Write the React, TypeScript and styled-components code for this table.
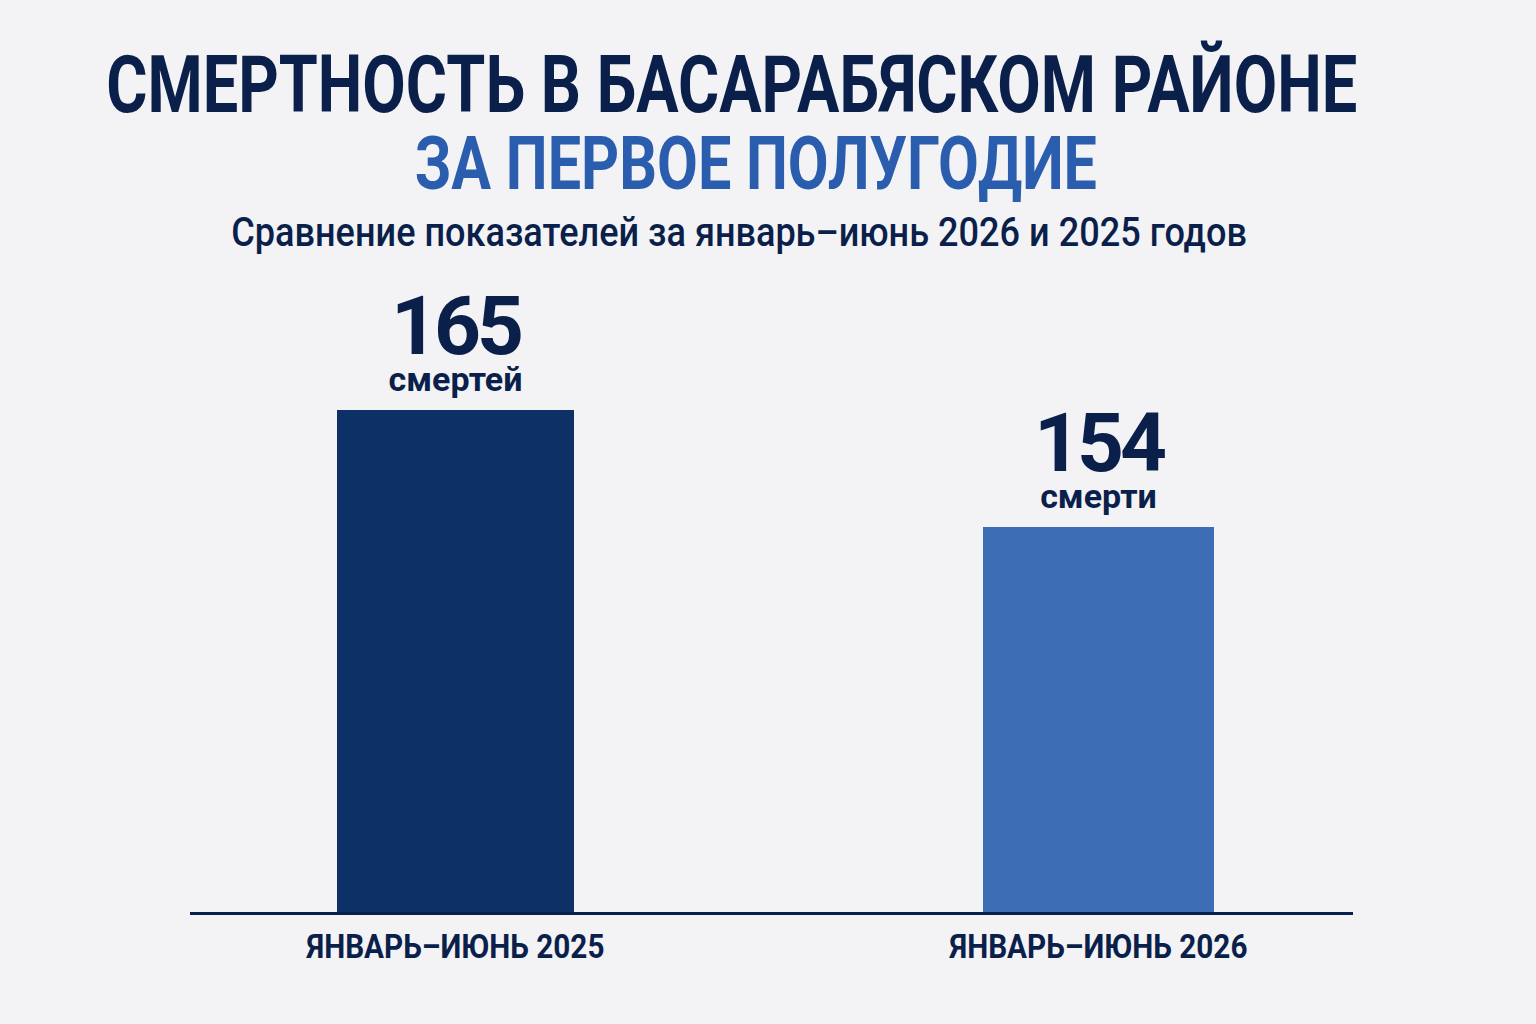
import React from "react";
import styled, { createGlobalStyle } from "styled-components";

const Global = createGlobalStyle`
  html, body { margin: 0; padding: 0; background: #f3f3f6; }
  body { width: 1536px; height: 1024px; overflow: hidden; }
`;

const Page = styled.div`
  width: 1536px;
  height: 1024px;
  background: #f3f3f6;
  display: flex;
  flex-direction: column;
  box-sizing: border-box;
  padding-top: 45px;
  overflow: hidden;
`;

const Header = styled.header`
  display: flex;
  flex-direction: column;
  align-items: center;
`;

/* Condensed type: the reference uses a condensed grotesque; Roboto squeezed horizontally */
const Line = styled.div<{
  $size: number;
  $lh: number;
  $weight: number;
  $color: string;
  $scale: number;
  $shift: number;
  $mt?: number;
}>`
  font-family: "Roboto", "Liberation Sans", sans-serif;
  font-size: ${(p) => p.$size}px;
  line-height: ${(p) => p.$lh}px;
  font-weight: ${(p) => p.$weight};
  color: ${(p) => p.$color};
  white-space: nowrap;
  margin-top: ${(p) => p.$mt ?? 0}px;
  margin-right: ${(p) => p.$shift * 2}px;
  transform: scaleX(${(p) => p.$scale});
  transform-origin: center;
`;

const Chart = styled.section`
  margin-left: 190px;
  width: 1163px;
  display: flex;
  flex-direction: column;
`;

const Plot = styled.div`
  height: 655px;
  display: flex;
  justify-content: space-between;
  align-items: flex-end;
  padding: 0 139px 0 147px;
`;

const Column = styled.div`
  display: flex;
  flex-direction: column;
  align-items: center;
`;

const Value = styled.div`
  font-family: "Roboto", "Liberation Sans", sans-serif;
  font-weight: 700;
  font-size: 82px;
  line-height: 66px;
  color: #0b1f4b;
  letter-spacing: -4px;
`;

const Unit = styled.div`
  font-family: "Roboto", "Liberation Sans", sans-serif;
  font-weight: 700;
  font-size: 34px;
  line-height: 40px;
  color: #0b1f4b;
  margin-bottom: 11px;
`;

const Bar = styled.div<{ $color: string; $w: number }>`
  width: ${(p) => p.$w}px;
  background: ${(p) => p.$color};
`;

const Axis = styled.div`
  height: 3px;
  background: #0b1f4b;
`;

const Labels = styled.div`
  display: flex;
  justify-content: space-between;
  padding: 12px 139px 0 147px;
`;

const LabelSlot = styled.div<{ $w: number }>`
  width: ${(p) => p.$w}px;
  display: flex;
  justify-content: center;
`;

const Label = styled.div`
  font-family: "Roboto", "Liberation Sans", sans-serif;
  font-weight: 700;
  font-size: 33px;
  line-height: 40px;
  color: #0b1f4b;
  white-space: nowrap;
  transform: scaleX(0.9);
  transform-origin: center;
`;

const data = [
  { value: 165, unit: "смертей", label: "ЯНВАРЬ–ИЮНЬ 2025", color: "#0d3166", w: 237, h: 502 },
  { value: 154, unit: "смерти", label: "ЯНВАРЬ–ИЮНЬ 2026", color: "#3c6db5", w: 231, h: 385 },
];

export default function App() {
  return (
    <Page>
      <Global />
      <Header>
        <Line $size={80} $lh={80} $weight={700} $color="#0b1f4b" $scale={0.788} $shift={36}>
          СМЕРТНОСТЬ В БАСАРАБЯСКОМ РАЙОНЕ
        </Line>
        <Line $size={75} $lh={76} $weight={700} $color="#2a5dad" $scale={0.79} $shift={12}>
          ЗА ПЕРВОЕ ПОЛУГОДИЕ
        </Line>
        <Line $size={41} $lh={50} $weight={500} $color="#0b1f4b" $scale={0.88} $shift={29} $mt={6}>
          Сравнение показателей за январь–июнь 2026 и 2025 годов
        </Line>
      </Header>
      <Chart>
        <Plot>
          {data.map((d) => (
            <Column key={d.label}>
              <Value>{d.value}</Value>
              <Unit>{d.unit}</Unit>
              <Bar $color={d.color} $w={d.w} style={{ height: d.h }} />
            </Column>
          ))}
        </Plot>
        <Axis />
        <Labels>
          {data.map((d) => (
            <LabelSlot key={d.label} $w={d.w}>
              <Label>{d.label}</Label>
            </LabelSlot>
          ))}
        </Labels>
      </Chart>
    </Page>
  );
}
